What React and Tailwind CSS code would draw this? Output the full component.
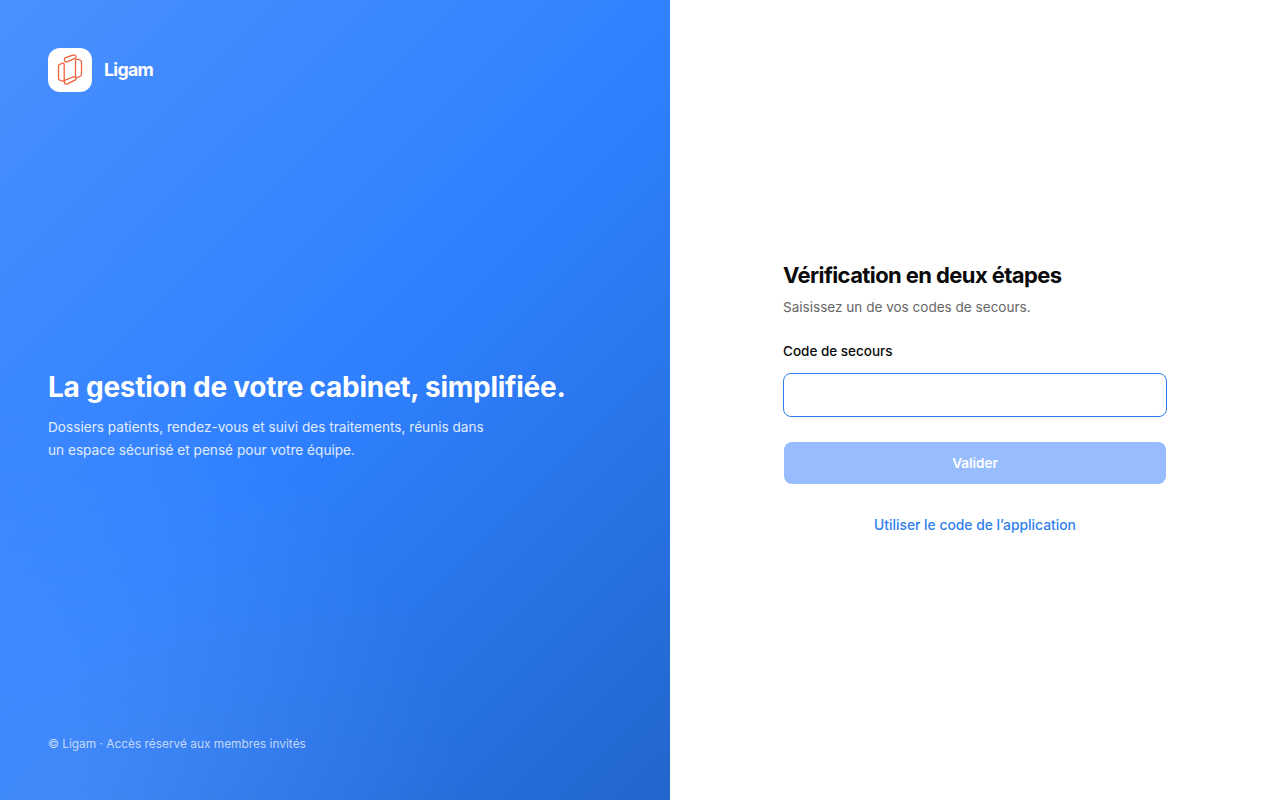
import React from 'react';

const LigamLogo = () => (
  <svg width="44" height="44" viewBox="0 0 44 44" fill="none" stroke="#f0603c" strokeWidth="1.3" strokeLinejoin="round" strokeLinecap="round">
    <path d="M10.5 18 Q10.5 17 11.5 16.5 L14 15.4 Q16.2 14.6 16.2 16.8 V31.5 Q16.2 33.6 14 33 L11.8 32.2 Q10.5 31.7 10.5 30.5 Z" />
    <path d="M27.5 13 Q27.5 10.8 29.7 11.3 L32 12 Q33.5 12.5 33.5 13.8 V26.5 Q33.5 27.5 32.5 28 L29.8 29.4 Q27.5 30.2 27.5 28 Z" />
    <path d="M16.5 11 Q16.5 10 17.5 9.6 L25 7.2 Q28 6.6 28 8.8 Q28 10 27 10.4 L19.5 13.6 Q16.5 14.4 16.5 12 Z" />
    <path d="M16.5 33.5 Q16.5 32.3 17.6 31.9 L25 29 Q28 28.2 28 30.6 Q28 31.8 26.9 32.2 L19.6 35.8 Q16.5 36.8 16.5 34.4 Z" />
  </svg>
);

const App = () => {
  return (
    <div className="flex h-screen w-full bg-white font-['Inter',sans-serif]">
      {/* Left panel */}
      <div className="flex w-[670px] flex-col justify-between bg-[radial-gradient(circle_at_10%_100%,rgba(255,255,255,0.1),rgba(255,255,255,0)_40%),linear-gradient(135deg,#4a90ff_0%,#2f80ff_50%,#2266cc_100%)] p-12 text-white">
        <div className="flex items-center gap-3">
          <div className="flex h-11 w-11 items-center justify-center rounded-xl bg-white">
            <LigamLogo />
          </div>
          <span className="text-[17.8px] leading-[26px] font-bold tracking-[-0.04em]">Ligam</span>
        </div>

        <div>
          <h1 className="text-[28px] leading-10 font-bold tracking-[-0.009em]">La gestion de votre cabinet, simplifiée.</h1>
          <p className="mt-[9px] max-w-[440px] text-[13.63px] leading-[23px] text-white/85">
            Dossiers patients, rendez-vous et suivi des traitements, réunis dans un espace sécurisé et pensé pour votre équipe.
          </p>
        </div>

        <p className="text-[11.88px] leading-4 text-white/70">© Ligam · Accès réservé aux membres invités</p>
      </div>

      {/* Right panel */}
      <div className="flex flex-1 items-center justify-center">
        <div className="w-[384px] pb-1">
          <h2 className="text-[22px] leading-7 font-bold tracking-[-0.027em] text-[#0a0a0a]">Vérification en deux étapes</h2>
          <p className="mt-2 text-[13.55px] leading-5 text-[#666666]">Saisissez un de vos codes de secours.</p>

          <label className="mt-6 block text-[13.5px] leading-5 font-medium text-[#0a0a0a]">Code de secours</label>
          <input
            type="text"
            className="mt-3 block h-11 w-full rounded-lg border border-[#2f80ed] bg-white px-3 text-sm outline-none"
          />

          <div className="mt-[25px] px-px">
            <button className="h-[42px] w-full rounded-lg bg-[#97bdff] text-[13.5px] font-semibold text-white">Valider</button>
          </div>

          <div className="mt-[31px] text-center text-[13.85px] leading-5">
            <a className="font-medium text-[#2f80ed]">Utiliser le code de l’application</a>
          </div>
        </div>
      </div>
    </div>
  );
};

export default App;
